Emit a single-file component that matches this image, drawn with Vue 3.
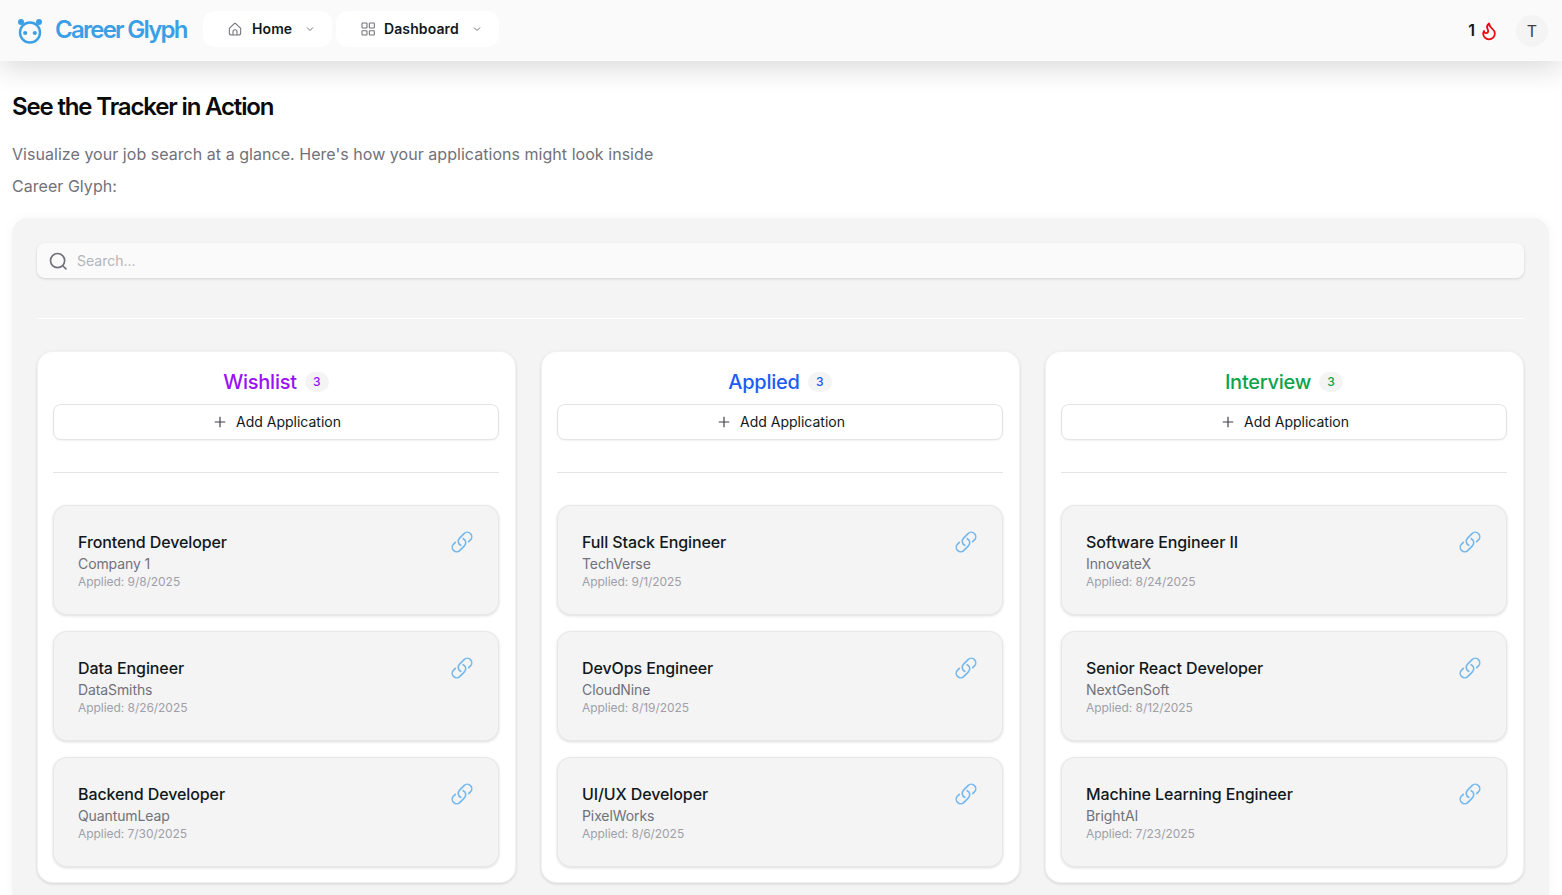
<template>
  <div class="page">
    <nav class="navbar">
      <div class="brand">
        <svg class="logo" viewBox="0 0 28 28" fill="none">
          <circle cx="14" cy="16.5" r="10" stroke="#3b9fe6" stroke-width="2.4" />
          <circle cx="5" cy="6" r="3" fill="#3b9fe6" />
          <circle cx="23" cy="6" r="3" fill="#3b9fe6" />
          <circle cx="9.2" cy="17" r="2.1" fill="#3b9fe6" />
          <circle cx="18.8" cy="17" r="2.1" fill="#3b9fe6" />
        </svg>
        <span class="brand-name">Career Glyph</span>
      </div>
      <button class="nav-btn home">
        <svg class="nav-icon" viewBox="0 0 24 24" fill="none" stroke="#71717a" stroke-width="1.6" stroke-linejoin="round">
          <path d="M3.5 11.2 10.4 4.3a2.2 2.2 0 0 1 3.2 0l6.9 6.9V18a3 3 0 0 1-3 3h-11a3 3 0 0 1-3-3z" />
          <path d="M9 21v-5a3 3 0 0 1 6 0v5" />
        </svg>
        <span class="nav-label">Home</span>
        <svg class="chev" viewBox="0 0 24 24" fill="none" stroke="#71717a" stroke-width="2"><path d="m6 9 6 6 6-6" /></svg>
      </button>
      <button class="nav-btn dash">
        <svg class="nav-icon" viewBox="0 0 24 24" fill="none" stroke="#71717a" stroke-width="1.6">
          <rect x="3" y="3" width="7.5" height="7.5" rx="1" />
          <rect x="14" y="3" width="7.5" height="7.5" rx="1" />
          <rect x="3" y="14.5" width="7.5" height="6.5" rx="1" />
          <rect x="14" y="14.5" width="7.5" height="6.5" rx="1" />
        </svg>
        <span class="nav-label">Dashboard</span>
        <svg class="chev" viewBox="0 0 24 24" fill="none" stroke="#71717a" stroke-width="2"><path d="m6 9 6 6 6-6" /></svg>
      </button>
      <div class="nav-right">
        <span class="streak">1</span>
        <svg class="flame" viewBox="0 0 24 24" fill="none" stroke="#f0050f" stroke-width="2.1" stroke-linejoin="round" stroke-linecap="round">
          <path d="M8.5 14.5A2.5 2.5 0 0 0 11 12c0-1.38-.5-2-1-3-1.072-2.143-.224-4.054 2-6 .5 2.5 2 4.9 4 6.5 2 1.6 3 3.5 3 5.5a7 7 0 1 1-14 0c0-1.153.433-2.294 1-3a2.5 2.5 0 0 0 2.5 2.5z" />
        </svg>
        <span class="avatar">T</span>
      </div>
    </nav>

    <main class="content">
      <h2 class="heading">See the Tracker in Action</h2>
      <p class="intro">Visualize your job search at a glance. Here's how your applications might look inside Career Glyph:</p>

      <section class="board">
        <div class="search">
          <svg class="search-icon" viewBox="0 0 24 24" fill="none" stroke="#71717a" stroke-width="2" stroke-linecap="round">
            <circle cx="11.5" cy="11.5" r="8.5" />
            <path d="m18 18 3.5 3.5" />
          </svg>
          <span class="placeholder">Search...</span>
        </div>
        <hr class="board-rule" />
        <div class="columns">
          <div v-for="col in columns" :key="col.title" class="column">
            <div class="col-head">
              <span class="col-title" :style="{ color: col.color }">{{ col.title }}</span>
              <span class="count" :style="{ color: col.color }">{{ col.jobs.length }}</span>
            </div>
            <button class="add-btn">
              <svg class="plus" viewBox="0 0 24 24" fill="none" stroke="#3f3f46" stroke-width="2"><path d="M12 3v18M3 12h18" /></svg>
              <span class="add-label">Add Application</span>
            </button>
            <hr class="col-rule" />
            <div class="cards">
              <article v-for="job in col.jobs" :key="job.role" class="card">
                <div class="card-text">
                  <div class="role">{{ job.role }}</div>
                  <div class="company">{{ job.company }}</div>
                  <div class="applied">Applied: {{ job.date }}</div>
                </div>
                <svg class="link" viewBox="0 0 24 24" fill="none" stroke="#73b8ef" stroke-width="1.6" stroke-linecap="round" stroke-linejoin="round">
                  <path d="M13.19 8.688a4.5 4.5 0 0 1 1.242 7.244l-4.5 4.5a4.5 4.5 0 0 1-6.364-6.364l1.757-1.757m13.35-.622 1.757-1.757a4.5 4.5 0 0 0-6.364-6.364l-4.5 4.5a4.5 4.5 0 0 0 1.242 7.244" />
                </svg>
              </article>
            </div>
          </div>
        </div>
      </section>
    </main>
  </div>
</template>

<script setup>
const columns = [
  {
    title: "Wishlist",
    color: "#9b11f7",
    jobs: [
      { role: "Frontend Developer", company: "Company 1", date: "9/8/2025" },
      { role: "Data Engineer", company: "DataSmiths", date: "8/26/2025" },
      { role: "Backend Developer", company: "QuantumLeap", date: "7/30/2025" },
    ],
  },
  {
    title: "Applied",
    color: "#1a5cf5",
    jobs: [
      { role: "Full Stack Engineer", company: "TechVerse", date: "9/1/2025" },
      { role: "DevOps Engineer", company: "CloudNine", date: "8/19/2025" },
      { role: "UI/UX Developer", company: "PixelWorks", date: "8/6/2025" },
    ],
  },
  {
    title: "Interview",
    color: "#0ca44a",
    jobs: [
      { role: "Software Engineer II", company: "InnovateX", date: "8/24/2025" },
      { role: "Senior React Developer", company: "NextGenSoft", date: "8/12/2025" },
      { role: "Machine Learning Engineer", company: "BrightAI", date: "7/23/2025" },
    ],
  },
];
</script>

<style>
html,
body {
  margin: 0;
  height: 100%;
  overflow: hidden;
  background: #fff;
}
</style>

<style scoped>
.page {
  font-family: Inter, "Liberation Sans", sans-serif;
  color: #11181c;
  height: 895px;
  overflow: hidden;
}
.navbar {
  position: relative;
  z-index: 2;
  height: 61px;
  display: flex;
  align-items: center;
  padding: 0 14px 0 16px;
  box-sizing: border-box;
  background: #fafafa;
  box-shadow: 0 6px 30px rgba(0, 0, 0, 0.16);
}
.brand {
  display: flex;
  align-items: center;
  gap: 11px;
  width: 187px;
  margin-top: -2px;
}
.logo {
  width: 28px;
  height: 28px;
}
.brand-name {
  font-size: 24px;
  font-weight: 600;
  letter-spacing: -1.75px;
  color: #3b9fe6;
  line-height: 28px;
}
.nav-btn {
  display: flex;
  align-items: center;
  height: 36px;
  margin-top: -3px;
  padding: 0;
  border: 0;
  border-radius: 12px;
  background: #fff;
  font: inherit;
  font-size: 14px;
  font-weight: 600;
  color: #11181c;
  letter-spacing: 0.1px;
}
.nav-label {
  position: relative;
  top: -1px;
}
.home {
  width: 129px;
  padding-left: 24px;
  margin-right: 4px;
}
.dash {
  width: 163px;
  padding-left: 24px;
}
.nav-icon {
  width: 16px;
  height: 16px;
  margin-right: 9px;
}
.dash .nav-icon {
  margin-right: 8px;
}
.chev {
  width: 12px;
  height: 12px;
  margin-left: auto;
  margin-right: 16px;
}
.nav-right {
  margin-left: auto;
  display: flex;
  align-items: center;
}
.streak {
  font-size: 16px;
  font-weight: 600;
  margin-top: -2px;
}
.flame {
  width: 20px;
  height: 20px;
  margin-left: 4px;
  margin-right: 17px;
}
.avatar {
  width: 32px;
  height: 32px;
  border-radius: 50%;
  background: #f4f4f5;
  display: flex;
  align-items: center;
  justify-content: center;
  font-size: 16px;
  color: #3f3f46;
}
.content {
  padding: 0 13px 0 12px;
}
.heading {
  margin: 0;
  padding-top: 32px;
  font-size: 24px;
  line-height: 28px;
  font-weight: 600;
  letter-spacing: -1.15px;
  color: #0a0a0a;
}
.intro {
  margin: 17px 0 16px;
  max-width: 672px;
  font-size: 16px;
  line-height: 32px;
  letter-spacing: 0.04px;
  color: #71717a;
}
.board {
  background: #f4f4f4;
  border: 1px solid #f4f4f4;
  border-radius: 16px;
  padding: 24px;
  box-shadow: 0 0 12px rgba(0, 0, 0, 0.04);
}
.search {
  display: flex;
  align-items: center;
  height: 35px;
  padding-left: 11px;
  border-radius: 8px;
  background: #fafafa;
  box-shadow: 0 1px 3px rgba(0, 0, 0, 0.14);
}
.search-icon {
  width: 20px;
  height: 20px;
  margin-right: 9px;
}
.placeholder {
  font-size: 14px;
  color: #b4b4bb;
}
.board-rule {
  margin: 40px 0 32px;
  border: 0;
  border-top: 1px solid #fff;
}
.columns {
  display: grid;
  grid-template-columns: repeat(3, 1fr);
  gap: 25px;
}
.column {
  background: #fff;
  border-radius: 16px;
  padding: 16px 17px 16px 16px;
  box-shadow: inset 0 0 0 1px rgba(0, 0, 0, 0.05), 0 1px 3px rgba(0, 0, 0, 0.14);
}
.col-head {
  display: flex;
  align-items: center;
  justify-content: center;
  gap: 8px;
  height: 30px;
  margin-bottom: 7px;
}
.col-title {
  font-size: 20px;
  font-weight: 500;
  letter-spacing: -0.25px;
}
.count {
  min-width: 24px;
  height: 20px;
  border-radius: 10px;
  background: #f4f4f5;
  font-size: 12px;
  font-weight: 500;
  line-height: 20px;
  text-align: center;
}
.add-btn {
  width: 100%;
  height: 36px;
  display: flex;
  align-items: center;
  justify-content: center;
  gap: 9px;
  padding: 0 0 0 2px;
  box-sizing: border-box;
  border: 1px solid #e4e4e7;
  border-radius: 8px;
  background: #fff;
  box-shadow: 0 1px 2px rgba(0, 0, 0, 0.06);
  font: inherit;
  font-size: 14px;
  color: #11181c;
}
.add-label {
  position: relative;
  top: -1px;
}
.plus {
  width: 14px;
  height: 14px;
}
.col-rule {
  margin: 32px 0;
  border: 0;
  border-top: 1px solid #e4e4e7;
}
.cards {
  display: flex;
  flex-direction: column;
  gap: 16px;
}
.card {
  height: 110px;
  box-sizing: border-box;
  display: flex;
  justify-content: space-between;
  padding: 25px 25px 24px 25px;
  border-radius: 14px;
  background: #f4f4f4;
  box-shadow: inset 0 0 0 1px rgba(0, 0, 0, 0.05), 0 1px 3px rgba(0, 0, 0, 0.14);
}
.role {
  font-size: 16px;
  font-weight: 500;
  line-height: 24px;
  letter-spacing: -0.1px;
  color: #11181c;
}
.company {
  font-size: 14px;
  line-height: 20px;
  letter-spacing: -0.1px;
  color: #71717a;
}
.applied {
  font-size: 12px;
  line-height: 16px;
  letter-spacing: -0.05px;
  color: #9f9fa8;
}
.link {
  width: 24px;
  height: 24px;
}
</style>
